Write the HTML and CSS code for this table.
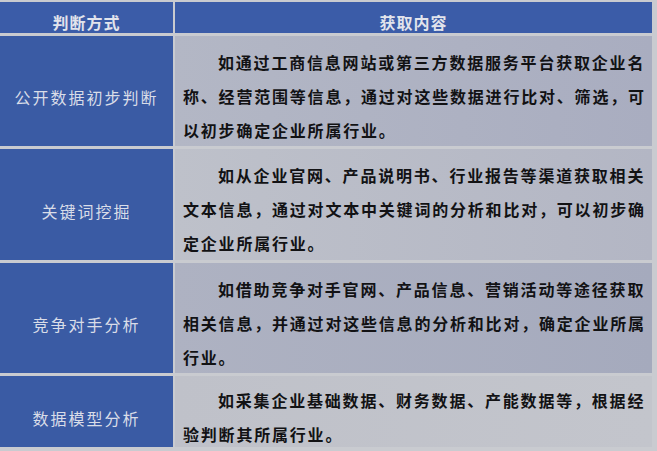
FILE: index.html
```html
<!DOCTYPE html>
<html lang="zh-CN">
<head>
<meta charset="utf-8">
<title>判断方式</title>
<link rel="stylesheet" href="styles.css">
</head>
<body>
<div class="table">
  <div class="head">判断方式</div>
  <div class="head">获取内容</div>

  <div class="method">公开数据初步判断</div>
  <div class="content row1">如通过工商信息网站或第三方数据服务平台获取企业名称、经营范围等信息，通过对这些数据进行比对、筛选，可以初步确定企业所属行业。</div>

  <div class="method">关键词挖掘</div>
  <div class="content row2">如从企业官网、产品说明书、行业报告等渠道获取相关文本信息，通过对文本中关键词的分析和比对，可以初步确定企业所属行业。</div>

  <div class="method">竞争对手分析</div>
  <div class="content row3">如借助竞争对手官网、产品信息、营销活动等途径获取相关信息，并通过对这些信息的分析和比对，确定企业所属行业。</div>

  <div class="method">数据模型分析</div>
  <div class="content row4">如采集企业基础数据、财务数据、产能数据等，根据经验判断其所属行业。</div>
</div>
</body>
</html>
```

FILE: styles.css
```css
html, body {
  margin: 0;
  padding: 0;
  background: #c9cbd0;
  width: 657px;
  height: 451px;
  overflow: hidden;
}

.table {
  display: grid;
  grid-template-columns: 173px 477px;
  grid-template-rows: 31px 110px 111px 110px 71px;
  column-gap: 2px;
  row-gap: 3px;
  padding-top: 2px;
  font-family: "Noto Sans CJK SC", "Noto Sans", sans-serif;
}

.head {
  background: #3b5ca8;
  color: #e2e4ec;
  font-weight: 700;
  font-size: 16px;
  letter-spacing: 1px;
  display: flex;
  align-items: center;
  justify-content: center;
  padding-top: 8px;
  line-height: 1;
}

.method {
  background: #3a5ba4;
  color: #d9dde8;
  font-size: 16px;
  letter-spacing: 2px;
  display: flex;
  align-items: center;
  justify-content: center;
  padding-top: 12px;
}

.content {
  color: #121214;
  font-size: 16px;
  font-weight: 600;
  letter-spacing: 1.8px;
  line-height: 34px;
  text-indent: 35px;
  padding: 9px 4px 0 8px;
  text-align: left;
}

.row1 { background: linear-gradient(90deg, #b3b7c5, #a9adc0); }
.row2 { background: linear-gradient(90deg, #bec1ca, #b3b6c4); }
.row3 { background: linear-gradient(90deg, #aeb2c2, #a5aabd); }
.row4 { background: linear-gradient(90deg, #bfc1c9, #c3c5cc); padding-top: 7px; }
```
